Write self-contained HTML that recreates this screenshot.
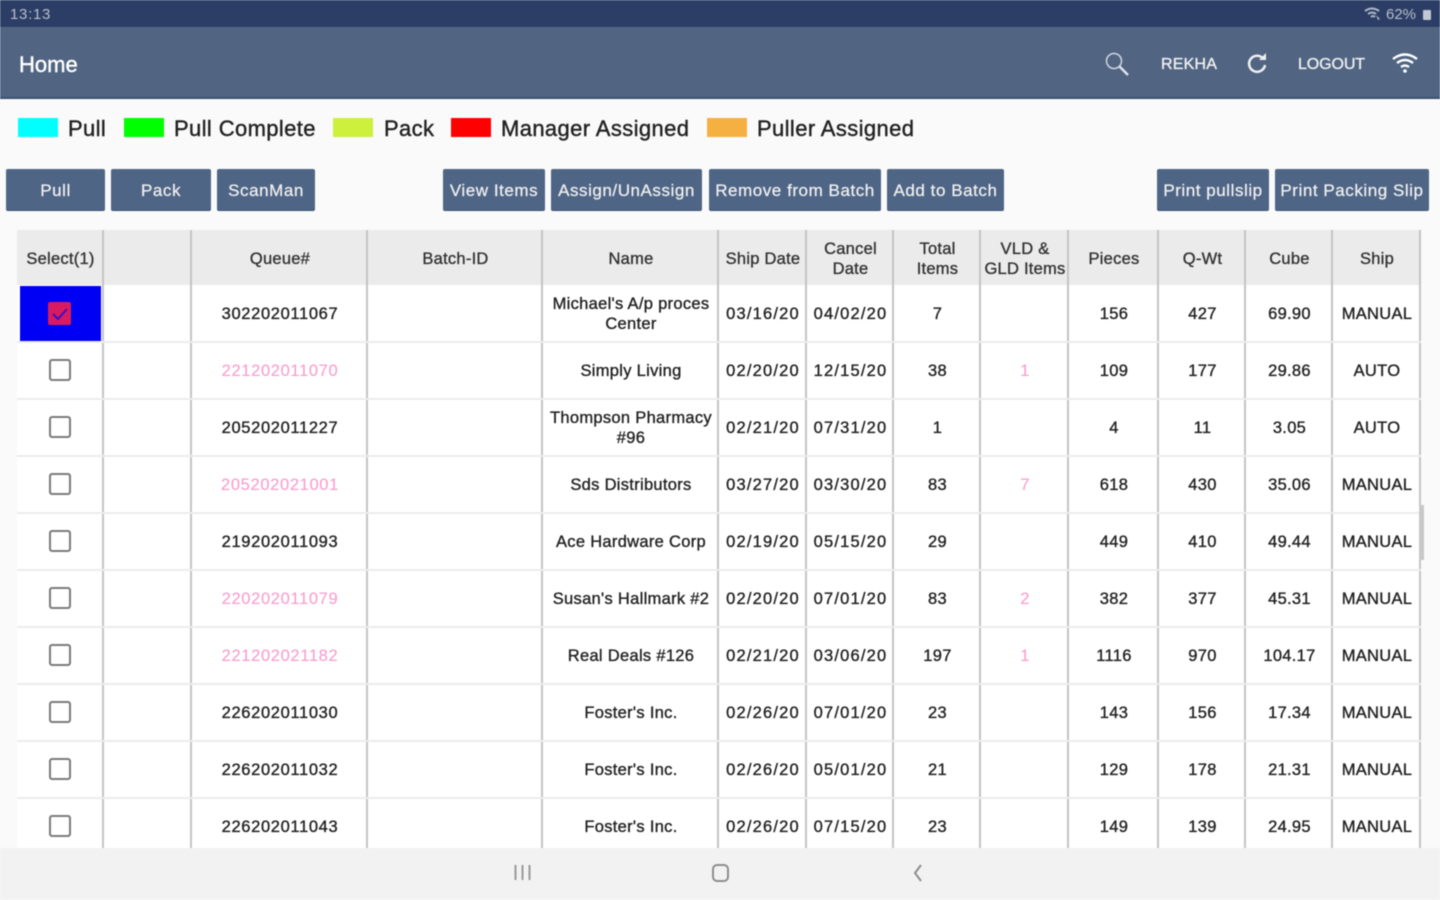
<!DOCTYPE html>
<html>
<head>
<meta charset="utf-8">
<style>
html,body{margin:0;padding:0;width:1440px;height:900px;overflow:hidden;background:#fafafa;font-family:"Liberation Sans",sans-serif;}
#root{position:relative;width:1440px;height:900px;overflow:hidden;filter:blur(.6px);}
.abs{position:absolute;}
#status{left:0;top:0;width:1440px;height:27px;background:#2c3e66;}
#bar{left:0;top:27px;width:1440px;height:70px;background:#516583;border-bottom:2px solid #3c5071;}
.t{position:absolute;white-space:nowrap;}
.leg{position:absolute;top:118px;height:19px;width:40px;}
.legt{position:absolute;top:116px;font-size:22px;line-height:26px;color:#222;white-space:nowrap;letter-spacing:.38px;-webkit-text-stroke:.4px #222;}
.btn{position:absolute;top:169px;height:42px;background:#4f6585;color:#f0f0f0;font-size:17px;line-height:44px;text-align:center;border-radius:2px;border-bottom:1px solid #3c5071;box-sizing:border-box;white-space:nowrap;overflow:hidden;letter-spacing:.55px;-webkit-text-stroke:.25px #f0f0f0;}
table{position:absolute;left:17px;top:230px;border-collapse:collapse;table-layout:fixed;width:1403px;background:#fff;}
td,th{padding:1px 0 0 2px;text-align:center;vertical-align:middle;overflow:hidden;font-size:16.5px;line-height:20px;color:#222;border-right:2px solid #c4c4c4;box-sizing:border-box;white-space:nowrap;}
th{height:55px;padding-top:2px;background:#ebebeb;font-weight:normal;color:#333;-webkit-text-stroke:.35px #333;letter-spacing:.25px;}
td{height:57px;border-bottom:2px solid #ececec;-webkit-text-stroke:.35px #222;letter-spacing:.65px;}
td:nth-child(5){letter-spacing:.3px;}
td:nth-child(6),td:nth-child(7){letter-spacing:1.2px;}
td:nth-child(n+8){letter-spacing:.3px;}
td.p{color:#f99ccf;-webkit-text-stroke:.1px #f99ccf;}
.n{white-space:normal;line-height:20px;}
.cb{display:inline-block;position:relative;top:-1.5px;left:-1px;width:18px;height:18px;border:2.5px solid #7a7a7a;border-radius:3px;vertical-align:middle;}
#sel{left:20px;top:286px;width:81px;height:55px;background:#0000f5;}
#nav{left:0;top:848px;width:1440px;height:52px;background:#f2f2f2;}
#sb{left:1419px;top:505px;width:5px;height:55px;background:#c8c8c8;}
</style>
</head>
<body>
<div id="root">
<div id="status" class="abs">
  <div class="t" style="left:10px;top:6px;font-size:15px;color:#b8bfcc;line-height:18px;letter-spacing:.7px;">13:13</div>
  <svg class="abs" style="left:1363px;top:6px" width="20" height="17" viewBox="0 0 20 17"><path d="M2 5Q9 0 16 5M5 8Q9 5 13 8M8 11Q10 9 12 11" fill="none" stroke="#aeb6c6" stroke-width="2"/><path d="M13 9l4 4-2 1z" fill="#aeb6c6"/></svg>
  <div class="t" style="left:1386px;top:6px;font-size:15px;color:#b8bfcc;line-height:18px;">62%</div>
  <div class="abs" style="left:1423px;top:10px;width:8px;height:10px;background:#c2c8d4;border-radius:1px;"></div>
</div>
<div id="bar" class="abs">
  <div class="t" style="left:19px;top:24px;font-size:22px;line-height:28px;color:#fff;-webkit-text-stroke:.4px #fff;">Home</div>
  <svg class="abs" style="left:1103px;top:23px" width="28" height="28" viewBox="0 0 28 28"><circle cx="11" cy="11" r="7.5" fill="none" stroke="#cfd6e0" stroke-width="1.5"/><path d="M16.5 16.5L25 25" stroke="#dfe4ea" stroke-width="2.5"/></svg>
  <div class="t" style="left:1161px;top:28px;font-size:16px;line-height:20px;color:#f0f0f0;-webkit-text-stroke:.35px #f0f0f0;letter-spacing:.2px;">REKHA</div>
  <svg class="abs" style="left:1246px;top:25px" width="23" height="23" viewBox="0 0 23 23"><path d="M17.5 7A8 8 0 1 0 19 13" fill="none" stroke="#f0f0f0" stroke-width="2.5"/><path d="M13 8h7V1z" fill="#f0f0f0"/></svg>
  <div class="t" style="left:1298px;top:28px;font-size:16px;line-height:20px;color:#f0f0f0;-webkit-text-stroke:.35px #f0f0f0;letter-spacing:-.1px;">LOGOUT</div>
  <svg class="abs" style="left:1392px;top:25px" width="26" height="22" viewBox="0 0 26 22"><path d="M1 7Q13-2 25 7M5 11Q13 5 21 11M9 15Q13 12 17 15" fill="none" stroke="#fff" stroke-width="2.4"/><circle cx="13" cy="19" r="1.8" fill="#fff"/></svg>
</div>

<div class="leg" style="left:18px;background:#00ffff"></div><div class="legt" style="left:68px">Pull</div>
<div class="leg" style="left:124px;background:#00ff00"></div><div class="legt" style="left:174px">Pull Complete</div>
<div class="leg" style="left:333px;background:#ccf03c"></div><div class="legt" style="left:384px">Pack</div>
<div class="leg" style="left:451px;background:#ff0000"></div><div class="legt" style="left:501px">Manager Assigned</div>
<div class="leg" style="left:707px;background:#f5b042"></div><div class="legt" style="left:757px">Puller Assigned</div>

<div class="btn" style="left:6px;width:99px">Pull</div>
<div class="btn" style="left:111px;width:100px">Pack</div>
<div class="btn" style="left:217px;width:98px">ScanMan</div>
<div class="btn" style="left:443px;width:102px">View Items</div>
<div class="btn" style="left:551px;width:151px">Assign/UnAssign</div>
<div class="btn" style="left:709px;width:172px">Remove from Batch</div>
<div class="btn" style="left:887px;width:117px">Add to Batch</div>
<div class="btn" style="left:1157px;width:112px">Print pullslip</div>
<div class="btn" style="left:1275px;width:154px">Print Packing Slip</div>

<table>
<colgroup><col style="width:86px"><col style="width:88px"><col style="width:176px"><col style="width:175px"><col style="width:176px"><col style="width:88px"><col style="width:87px"><col style="width:87px"><col style="width:88px"><col style="width:90px"><col style="width:87px"><col style="width:87px"><col style="width:88px"></colgroup>
<tr><th>Select(1)</th><th></th><th>Queue#</th><th>Batch-ID</th><th>Name</th><th>Ship Date</th><th>Cancel<br>Date</th><th>Total<br>Items</th><th>VLD &amp;<br>GLD Items</th><th>Pieces</th><th>Q-Wt</th><th>Cube</th><th>Ship</th></tr>
<tr><td></td><td></td><td>302202011067</td><td></td><td class="n">Michael's A/p proces<br>Center</td><td>03/16/20</td><td>04/02/20</td><td>7</td><td></td><td>156</td><td>427</td><td>69.90</td><td>MANUAL</td></tr>
<tr><td><span class="cb"></span></td><td></td><td class="p">221202011070</td><td></td><td>Simply Living</td><td>02/20/20</td><td>12/15/20</td><td>38</td><td class="p">1</td><td>109</td><td>177</td><td>29.86</td><td>AUTO</td></tr>
<tr><td><span class="cb"></span></td><td></td><td>205202011227</td><td></td><td class="n">Thompson Pharmacy<br>#96</td><td>02/21/20</td><td>07/31/20</td><td>1</td><td></td><td>4</td><td>11</td><td>3.05</td><td>AUTO</td></tr>
<tr><td><span class="cb"></span></td><td></td><td class="p">205202021001</td><td></td><td>Sds Distributors</td><td>03/27/20</td><td>03/30/20</td><td>83</td><td class="p">7</td><td>618</td><td>430</td><td>35.06</td><td>MANUAL</td></tr>
<tr><td><span class="cb"></span></td><td></td><td>219202011093</td><td></td><td>Ace Hardware Corp</td><td>02/19/20</td><td>05/15/20</td><td>29</td><td></td><td>449</td><td>410</td><td>49.44</td><td>MANUAL</td></tr>
<tr><td><span class="cb"></span></td><td></td><td class="p">220202011079</td><td></td><td>Susan's Hallmark #2</td><td>02/20/20</td><td>07/01/20</td><td>83</td><td class="p">2</td><td>382</td><td>377</td><td>45.31</td><td>MANUAL</td></tr>
<tr><td><span class="cb"></span></td><td></td><td class="p">221202021182</td><td></td><td>Real Deals #126</td><td>02/21/20</td><td>03/06/20</td><td>197</td><td class="p">1</td><td>1116</td><td>970</td><td>104.17</td><td>MANUAL</td></tr>
<tr><td><span class="cb"></span></td><td></td><td>226202011030</td><td></td><td>Foster's Inc.</td><td>02/26/20</td><td>07/01/20</td><td>23</td><td></td><td>143</td><td>156</td><td>17.34</td><td>MANUAL</td></tr>
<tr><td><span class="cb"></span></td><td></td><td>226202011032</td><td></td><td>Foster's Inc.</td><td>02/26/20</td><td>05/01/20</td><td>21</td><td></td><td>129</td><td>178</td><td>21.31</td><td>MANUAL</td></tr>
<tr><td><span class="cb"></span></td><td></td><td>226202011043</td><td></td><td>Foster's Inc.</td><td>02/26/20</td><td>07/15/20</td><td>23</td><td></td><td>149</td><td>139</td><td>24.95</td><td>MANUAL</td></tr>
</table>

<div id="sel" class="abs">
  <svg class="abs" style="left:28px;top:16px" width="24" height="24" viewBox="0 0 24 24"><rect width="23" height="23" rx="2" fill="#d81b60"/><path d="M5 12l5 5 9-10" fill="none" stroke="#3a10c8" stroke-width="2"/></svg>
</div>
<div id="sb" class="abs"></div>

<div id="nav" class="abs">
  <svg class="abs" style="left:513px;top:16px" width="20" height="18" viewBox="0 0 20 18"><path d="M2.5 1v15M9.5 1v15M16.5 1v15" stroke="#9a9a9a" stroke-width="2"/></svg>
  <svg class="abs" style="left:710px;top:15px" width="22" height="20" viewBox="0 0 22 20"><rect x="3" y="2" width="15" height="16" rx="4" fill="none" stroke="#8e8e8e" stroke-width="2"/></svg>
  <svg class="abs" style="left:910px;top:15px" width="16" height="20" viewBox="0 0 16 20"><path d="M11 2L5 10l6 8" fill="none" stroke="#8e8e8e" stroke-width="2"/></svg>
</div>
</div>
</body>
</html>
